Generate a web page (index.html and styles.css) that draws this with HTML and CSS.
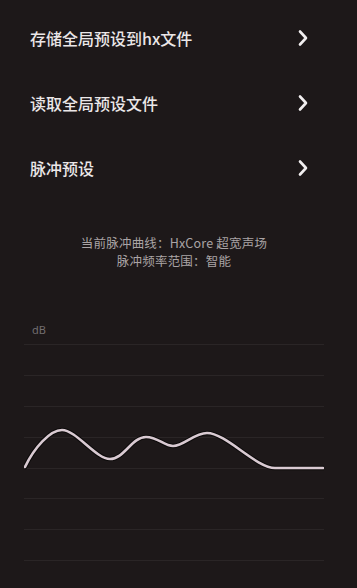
FILE: index.html
```html
<!DOCTYPE html>
<html lang="zh">
<head>
<meta charset="utf-8">
<link rel="stylesheet" href="styles.css">
</head>
<body>
<div class="page">
  <ul class="menu">
    <li class="row"><span class="label">存储全局预设到hx文件</span>
      <svg class="chev" width="12" height="18" viewBox="0 0 12 18"><polyline points="3,2.5 9,9 3,15.5" fill="none" stroke="#f2eff0" stroke-width="2.6" stroke-linecap="round" stroke-linejoin="round"/></svg></li>
    <li class="row"><span class="label">读取全局预设文件</span>
      <svg class="chev" width="12" height="18" viewBox="0 0 12 18"><polyline points="3,2.5 9,9 3,15.5" fill="none" stroke="#f2eff0" stroke-width="2.6" stroke-linecap="round" stroke-linejoin="round"/></svg></li>
    <li class="row"><span class="label">脉冲预设</span>
      <svg class="chev" width="12" height="18" viewBox="0 0 12 18"><polyline points="3,2.5 9,9 3,15.5" fill="none" stroke="#f2eff0" stroke-width="2.6" stroke-linecap="round" stroke-linejoin="round"/></svg></li>
  </ul>
  <div class="info">
    <div>当前脉冲曲线：HxCore 超宽声场</div>
    <div>脉冲频率范围：智能</div>
  </div>
  <div class="chart">
    <div class="unit">dB</div>
    <svg class="plot" width="300" height="224" viewBox="0 0 300 224">
      <g stroke="#2a2526" stroke-width="1">
        <line x1="0" y1="4.5" x2="300" y2="4.5"/>
        <line x1="0" y1="35.5" x2="300" y2="35.5"/>
        <line x1="0" y1="66.5" x2="300" y2="66.5"/>
        <line x1="0" y1="97.5" x2="300" y2="97.5"/>
        <line x1="0" y1="128.5" x2="300" y2="128.5"/>
        <line x1="0" y1="158.5" x2="300" y2="158.5"/>
        <line x1="0" y1="189.5" x2="300" y2="189.5"/>
        <line x1="0" y1="220.5" x2="300" y2="220.5"/>
      </g>
      <path d="M1,127 C10,108 26,90 38,90 C52,90 72,119 86,119 C100,119 108,97 122,97 C134,97 140,106 149,106 C160,106 170,93 183,93 C202,93 232,128 251,128 L299,128" fill="none" stroke="#0c0a0a" stroke-width="4.6" stroke-linecap="round" stroke-linejoin="round"/>
      <path d="M1,127 C10,108 26,90 38,90 C52,90 72,119 86,119 C100,119 108,97 122,97 C134,97 140,106 149,106 C160,106 170,93 183,93 C202,93 232,128 251,128 L299,128" fill="none" stroke="#d9cad2" stroke-width="2.6" stroke-linecap="round" stroke-linejoin="round"/>
    </svg>
  </div>
</div>
</body>
</html>
```
FILE: styles.css
```css
html, body {
  margin: 0;
  padding: 0;
  background: #1d1819;
}
.page {
  width: 357px;
  height: 588px;
  overflow: hidden;
  font-family: "Noto Sans CJK SC", "Noto Sans", sans-serif;
}
.menu {
  list-style: none;
  margin: 0;
  padding: 5px 0 0 0;
}
.row {
  height: 65px;
  display: flex;
  align-items: center;
  justify-content: space-between;
  padding: 0 48px 0 30px;
}
.label {
  font-size: 16px;
  font-weight: 500;
  color: #ebe7e8;
  line-height: 20px;
}
.chev {
  display: block;
}
.info {
  margin-top: 34px;
  padding-right: 9px;
  text-align: center;
  font-size: 12.5px;
  letter-spacing: 0.2px;
  line-height: 18px;
  color: #aaa4a5;
}
.chart {
  margin-top: 53px;
  padding-left: 24px;
}
.unit {
  padding-left: 8px;
  font-family: "Noto Sans", sans-serif;
  font-size: 11px;
  line-height: 14px;
  color: #726d6f;
}
.plot {
  display: block;
  margin-top: 3px;
}
```
